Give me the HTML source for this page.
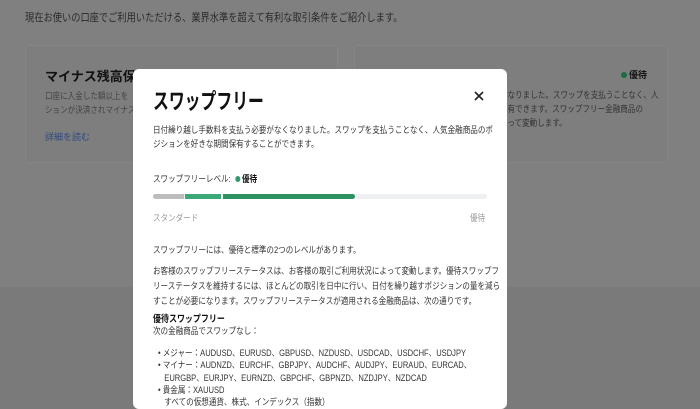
<!DOCTYPE html>
<html><head><meta charset="utf-8"><style>
*{margin:0;padding:0;box-sizing:border-box}
body{width:700px;height:400px;overflow:hidden;position:relative;background:#7a7a7a;font-family:"Liberation Sans","Noto Sans CJK JP",sans-serif;}
.a{position:absolute;white-space:nowrap}
.s{transform:scaleX(0.84);transform-origin:0 0}
.top{position:absolute;left:0;top:0;width:700px;height:287px;background:#808080}
.card{position:absolute;top:45px;height:118px;border:1px solid #868686;border-radius:3px;background:#7e7e7e}
.modal{position:absolute;left:133px;top:69px;width:374px;height:340px;background:#fff;border-radius:6px;z-index:5}
.t{color:#333;font-size:9px}
</style></head><body>
<div class="top"></div>
<div class="a s" style="left:25px;top:9px;font-size:11px;color:#2a2a2a">現在お使いの口座でご利用いただける、業界水準を超えて有利な取引条件をご紹介します。</div>
<div class="card" style="left:25px;width:313px"></div>
<div class="card" style="left:354px;width:314px"></div>
<div class="a" style="left:45px;top:66px;font-size:13px;font-weight:bold;color:#111">マイナス残高保護</div>
<div class="a s" style="left:45px;top:89px;font-size:9px;color:#444;line-height:14px">口座に入金した額以上を<br>ションが決済されマイナス</div>
<div class="a" style="left:45px;top:130px;font-size:9px;color:#2f4a80">詳細を読む</div>
<div class="a" style="left:621px;top:68px;font-size:9px;font-weight:bold;color:#111"><span style="display:inline-block;width:6px;height:6px;border-radius:50%;background:#1d6b40;margin-right:2px"></span>優待</div>
<div class="a s" style="left:500px;top:88px;font-size:9px;color:#333;line-height:14px">くなりました。スワップを支払うことなく、人<br>保有できます。スワップフリー金融商品の<br>よって変動します。</div>
<div class="modal">
<div class="a s" style="left:20px;top:15px;font-size:22px;font-weight:bold;color:#111;transform:scaleX(0.72)">スワップフリー</div>
<svg class="a" style="left:341px;top:22px" width="10" height="10" viewBox="0 0 10 10"><path d="M1 1L9 9M9 1L1 9" stroke="#222" stroke-width="1.6"/></svg>
<div class="a t s" style="left:20px;top:55px;line-height:13.5px">日付繰り越し手数料を支払う必要がなくなりました。スワップを支払うことなく、人気金融商品のポ<br>ジションを好きな期間保有することができます。</div>
<div class="a t s" style="left:20px;top:103px">スワップフリーレベル: <span style="display:inline-block;width:6px;height:6px;border-radius:50%;background:#2e9b68;margin:0 2px 0 3px"></span><b style="color:#111">優待</b></div>
<div class="a" style="left:20px;top:125px;width:334px;height:5px;border-radius:3px;background:#eef0f2"></div>
<div class="a" style="left:20px;top:125px;width:31px;height:5px;border-radius:3px 0 0 3px;background:#bdbdbd"></div>
<div class="a" style="left:52px;top:125px;width:36px;height:5px;background:#3ba877"></div>
<div class="a" style="left:90px;top:125px;width:132px;height:5px;border-radius:0 3px 3px 0;background:#2e9162"></div>
<div class="a s" style="left:20px;top:142px;font-size:9px;color:#999">スタンダード</div>
<div class="a s" style="left:337px;top:142px;font-size:9px;color:#999">優待</div>
<div class="a t s" style="left:20px;top:174px">スワップフリーには、優待と標準の2つのレベルがあります。</div>
<div class="a t s" style="left:20px;top:195px;line-height:15px">お客様のスワップフリーステータスは、お客様の取引ご利用状況によって変動します。優待スワップフ<br>リーステータスを維持するには、ほとんどの取引を日中に行い、日付を繰り越すポジションの量を減ら<br>すことが必要になります。スワップフリーステータスが適用される金融商品は、次の通りです。</div>
<div class="a s" style="left:20px;top:242px;font-size:9.5px;font-weight:bold;color:#111">優待スワップフリー</div>
<div class="a t s" style="left:20px;top:255px">次の金融商品でスワップなし：</div>
<div class="a t s" style="left:25px;top:278px;line-height:12.3px">
• メジャー：AUDUSD、EURUSD、GBPUSD、NZDUSD、USDCAD、USDCHF、USDJPY<br>
• マイナー：AUDNZD、EURCHF、GBPJPY、AUDCHF、AUDJPY、EURAUD、EURCAD、<br>
&nbsp;&nbsp;&nbsp;EURGBP、EURJPY、EURNZD、GBPCHF、GBPNZD、NZDJPY、NZDCAD<br>
• 貴金属：XAUUSD<br>
&nbsp;&nbsp;&nbsp;すべての仮想通貨、株式、インデックス（指数）</div>
</div>
</body></html>
